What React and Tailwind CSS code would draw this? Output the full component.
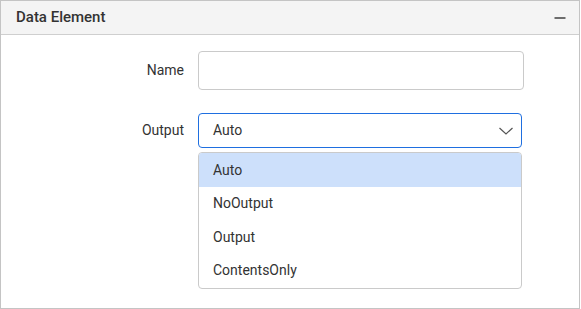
export default function App() {
  const options = ["Auto", "NoOutput", "Output", "ContentsOnly"];

  return (
    <div
      className="w-[580px] h-[309px] border border-[#c4c4c4] bg-white text-[#333333] flex flex-col"
      style={{ fontFamily: "Roboto, 'Liberation Sans', sans-serif" }}
    >
      {/* HEADER */}
      <div className="h-[34px] shrink-0 bg-[#f4f4f4] border-b border-[#cfcfcf] flex items-center justify-between pl-[15px] pr-[13px]">
        <span className="text-[15px] font-medium">Data Element</span>
        <svg width="12" height="12" viewBox="0 0 12 12">
          <line x1="0.5" y1="6" x2="11.5" y2="6" stroke="#333" strokeWidth="1.4" />
        </svg>
      </div>

      {/* BODY */}
      <div className="pt-[16px] grid grid-cols-[183px_auto] gap-x-[14px] items-center">
        <label className="text-right text-[14px] text-[#333]">Name</label>
        <input
          type="text"
          className="w-[326px] h-[39px] rounded-[4px] border border-[#cacaca] outline-none px-[14px] text-[14px]"
        />

        <label className="mt-[23px] text-right text-[14px] text-[#333]">Output</label>
        <div className="mt-[23px] relative">
          <div className="w-[324px] h-[35px] rounded-[4px] border border-[#1f6fe0] flex items-center justify-between pl-[14px] pr-[7px] text-[14px]">
            <span>Auto</span>
            <svg width="16" height="10" viewBox="0 0 16 10">
              <path d="M1.5 2 L8 8 L14.5 2" fill="none" stroke="#555" strokeWidth="1.2" />
            </svg>
          </div>

          {/* DROPDOWN */}
          <div className="absolute left-0 top-[39px] w-[324px] rounded-[4px] border border-[#cacaca] bg-white overflow-hidden z-10">
            {options.map((o, i) => (
              <div
                key={o}
                className={
                  i === 0
                    ? "h-[34px] flex items-center pl-[14px] text-[14px] bg-[#cde0fb]"
                    : "h-[33.5px] flex items-center pl-[14px] text-[14px]"
                }
              >
                {o}
              </div>
            ))}
          </div>
        </div>
      </div>
    </div>
  );
}
